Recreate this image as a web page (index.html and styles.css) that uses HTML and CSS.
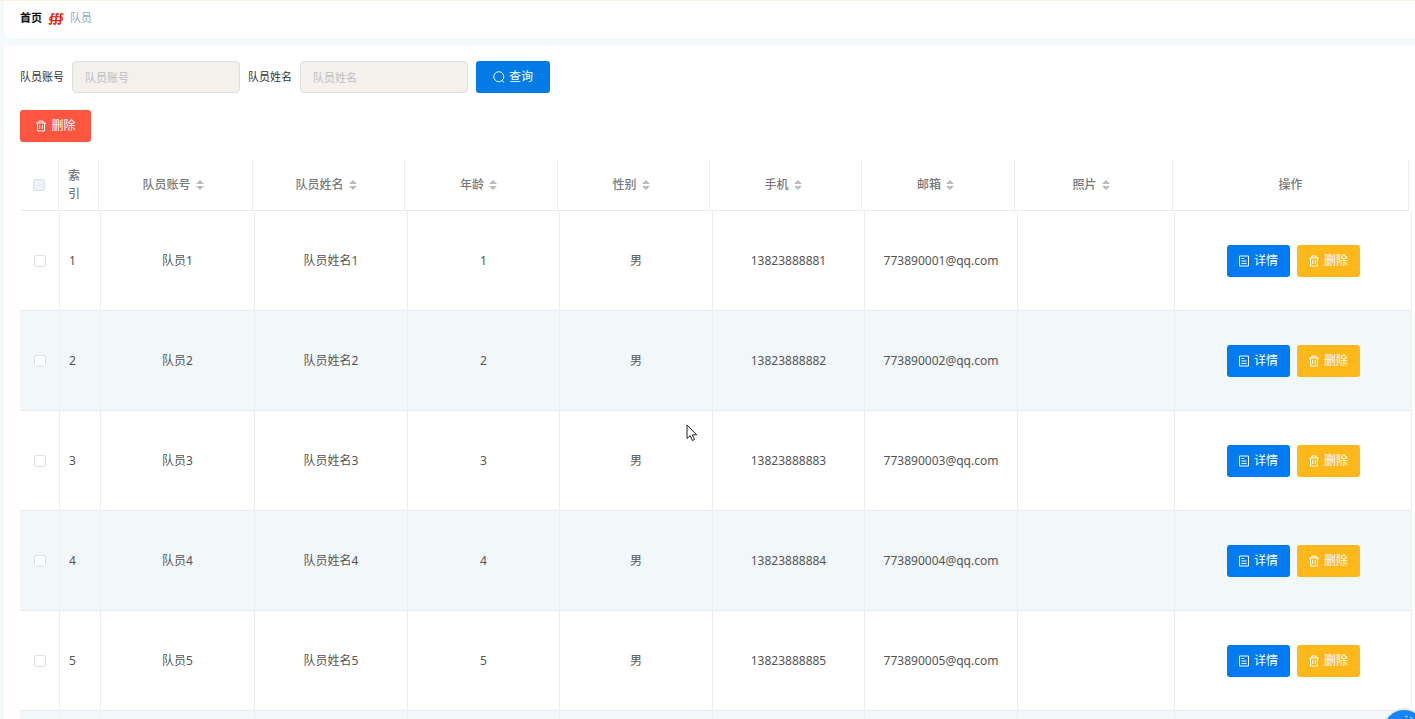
FILE: index.html
```html
<!DOCTYPE html>
<html lang="zh-CN">
<head>
<meta charset="utf-8">
<title>队员</title>
<link rel="stylesheet" href="styles.css">
</head>
<body>
<svg class="sprite" aria-hidden="true">
  <symbol id="trash" viewBox="0 0 12 12"><path d="M1 3h10M4 3V1h4v2M2.500 3v8h7V3M4.700 5v4M7.300 5v4" fill="none" stroke="currentColor"/></symbol>
  <symbol id="doc" viewBox="0 0 12 12"><path d="M1.500 1h9v10h-9zM3.500 3.500h2.500M3.500 6h5M3.500 8.500h5" fill="none" stroke="currentColor"/></symbol>
  <symbol id="search" viewBox="0 0 12 12"><path d="M8.800 9.300l2.400 2.200M10.800 5.700A5 5 0 1 1 .8 5.700a5 5 0 0 1 10 0z" fill="none" stroke="currentColor"/></symbol>
  <symbol id="sort" viewBox="0 0 8 10"><path d="M4 0l4 4H0zM4 10l4-4H0z" fill="currentColor"/></symbol>
</svg>
<div class="page">
  <nav class="breadcrumb">
    <a class="home" href="#">首页</a><span class="separator">∰</span><span class="current">队员</span>
  </nav>
  <main class="card">
    <form class="filters">
      <label for="account">队员账号</label>
      <input id="account" class="field" type="text" placeholder="队员账号">
      <label for="name">队员姓名</label>
      <input id="name" class="field" type="text" placeholder="队员姓名">
      <button class="btn btn-search" type="button"><svg class="icon"><use href="#search"/></svg>查询</button>
    </form>
    <div class="actions">
      <button class="btn btn-delete" type="button"><svg class="icon"><use href="#trash"/></svg>删除</button>
    </div>
    <div class="head-wrap">
      <table class="grid head">
        <colgroup><col class="h-check"><col class="h-index"><col class="w154"><col class="w152"><col class="w153"><col class="w152"><col class="w152"><col class="w153"><col class="w158"><col class="w236"></colgroup>
        <thead>
          <tr>
            <th><input class="check check-all" type="checkbox" aria-label="全选"></th>
            <th class="index">索引</th>
            <th><span class="sortable">队员账号<svg class="sort"><use href="#sort"/></svg></span></th>
            <th><span class="sortable">队员姓名<svg class="sort"><use href="#sort"/></svg></span></th>
            <th><span class="sortable">年龄<svg class="sort"><use href="#sort"/></svg></span></th>
            <th><span class="sortable">性别<svg class="sort"><use href="#sort"/></svg></span></th>
            <th><span class="sortable">手机<svg class="sort"><use href="#sort"/></svg></span></th>
            <th><span class="sortable">邮箱<svg class="sort"><use href="#sort"/></svg></span></th>
            <th><span class="sortable">照片<svg class="sort"><use href="#sort"/></svg></span></th>
            <th>操作</th>
          </tr>
        </thead>
      </table>
    </div>
    <table class="grid rows">
      <colgroup><col class="b-check"><col class="b-index"><col class="w154"><col class="w153"><col class="w152"><col class="w153"><col class="w152"><col class="w153"><col class="w157"><col class="w237"></colgroup>
      <tbody>
        <tr><td><input class="check" type="checkbox" aria-label="选择 1"></td><td class="index">1</td><td>队员1</td><td>队员姓名1</td><td>1</td><td>男</td><td>13823888881</td><td>773890001@qq.com</td><td></td><td><div class="ops"><button class="btn btn-detail" type="button"><svg class="icon"><use href="#doc"/></svg>详情</button><button class="btn btn-remove" type="button"><svg class="icon"><use href="#trash"/></svg>删除</button></div></td></tr>
        <tr><td><input class="check" type="checkbox" aria-label="选择 2"></td><td class="index">2</td><td>队员2</td><td>队员姓名2</td><td>2</td><td>男</td><td>13823888882</td><td>773890002@qq.com</td><td></td><td><div class="ops"><button class="btn btn-detail" type="button"><svg class="icon"><use href="#doc"/></svg>详情</button><button class="btn btn-remove" type="button"><svg class="icon"><use href="#trash"/></svg>删除</button></div></td></tr>
        <tr><td><input class="check" type="checkbox" aria-label="选择 3"></td><td class="index">3</td><td>队员3</td><td>队员姓名3</td><td>3</td><td>男</td><td>13823888883</td><td>773890003@qq.com</td><td></td><td><div class="ops"><button class="btn btn-detail" type="button"><svg class="icon"><use href="#doc"/></svg>详情</button><button class="btn btn-remove" type="button"><svg class="icon"><use href="#trash"/></svg>删除</button></div></td></tr>
        <tr><td><input class="check" type="checkbox" aria-label="选择 4"></td><td class="index">4</td><td>队员4</td><td>队员姓名4</td><td>4</td><td>男</td><td>13823888884</td><td>773890004@qq.com</td><td></td><td><div class="ops"><button class="btn btn-detail" type="button"><svg class="icon"><use href="#doc"/></svg>详情</button><button class="btn btn-remove" type="button"><svg class="icon"><use href="#trash"/></svg>删除</button></div></td></tr>
        <tr><td><input class="check" type="checkbox" aria-label="选择 5"></td><td class="index">5</td><td>队员5</td><td>队员姓名5</td><td>5</td><td>男</td><td>13823888885</td><td>773890005@qq.com</td><td></td><td><div class="ops"><button class="btn btn-detail" type="button"><svg class="icon"><use href="#doc"/></svg>详情</button><button class="btn btn-remove" type="button"><svg class="icon"><use href="#trash"/></svg>删除</button></div></td></tr>
        <tr><td></td><td></td><td></td><td></td><td></td><td></td><td></td><td></td><td></td><td></td></tr>
      </tbody>
    </table>
  </main>
  <svg class="pointer" viewBox="0 0 12 18" aria-hidden="true"><path d="M1 1v13.500l3.200-3 2.100 5 2.200-1-2.100-4.700h4.300z" fill="#fff" stroke="#222"/></svg>
  <svg class="bubble" viewBox="0 0 44 44" aria-hidden="true"><circle cx="22" cy="22" r="21" fill="#1684f5" stroke="#e6edf2" stroke-width="2"/><path d="M23 8l3 1M28 9l3 2" stroke="#bfe0ff" fill="none"/></svg>
</div>
</body>
</html>
```
FILE: styles.css
```css
* { box-sizing: border-box; }

body {
  margin: 0;
  background: #f4f9fb;
  color: #606266;
  font-family: "Noto Sans", "Noto Sans CJK SC", sans-serif;
  font-size: 12px;
  line-height: 18px;
}

.sprite { position: absolute; width: 0; height: 0; }

.page {
  position: relative;
  display: flex;
  flex-direction: column;
  gap: 7px;
  height: 100vh;
  overflow: hidden;
  padding-left: 4px;
  border-top: 1px solid #fcf3e0;
}

.breadcrumb {
  display: flex;
  flex: none;
  align-items: center;
  padding: 8px 16px 11px;
  background: #fff;
  border-radius: 0 0 0 8px;
  font-size: 11px;
}
.home { color: #111; font-weight: 700; text-decoration: none; }
.separator {
  width: 28px;
  color: #f01800;
  font-family: "DejaVu Sans", sans-serif;
  font-size: 12px;
  font-style: italic;
  font-weight: 700;
  text-align: center;
}
.current { color: #97a8be; }

.card {
  flex: 1;
  padding: 16px 3px 0 16px;
  background: #fff;
}

.filters { display: flex; align-items: center; gap: 8px; }
.filters label { color: #333; font-size: 11px; }

.field {
  width: 168px;
  height: 32px;
  padding: 0 12px;
  border: 1px solid #dfe0e4;
  border-radius: 4px;
  background: #f4f1ed;
  color: #606266;
  font: inherit;
  font-size: 11px;
}
.field::placeholder { color: #b9bdc5; }

.btn {
  display: inline-flex;
  align-items: center;
  justify-content: center;
  gap: 4px;
  height: 32px;
  padding: 0;
  border: 0;
  border-radius: 3px;
  color: #fff;
  font: inherit;
}
.icon { width: 12px; height: 12px; }
.btn-search { width: 74px; background: #027be6; }
.btn-delete { width: 71px; background: #ff5541; }
.btn-detail { width: 63px; background: #007bf2; }
.btn-remove { width: 63px; background: #feb81a; }

.actions { display: flex; padding: 17px 0; }

.head-wrap { padding-right: 3px; }

.grid {
  width: 100%;
  table-layout: fixed;
  border-collapse: separate;
  border-spacing: 0;
}
.grid th, .grid td {
  padding: 0;
  border-right: 1px solid #ebeef3;
  border-bottom: 1px solid #e8ecf2;
  text-align: center;
}
.grid th { height: 52px; color: #77797d; font-weight: 500; }
.grid td { height: 100px; color: #555; }
.grid .index { padding-left: 9px; padding-right: 9px; text-align: left; }
.rows tr:nth-child(even) { background: #f2f7fa; }

.h-check { width: 39px; }
.h-index { width: 40px; }
.b-check { width: 40px; }
.b-index { width: 41px; }
.w152 { width: 152px; }
.w153 { width: 153px; }
.w154 { width: 154px; }
.w157 { width: 157px; }
.w158 { width: 158px; }
.w236 { width: 236px; }
.w237 { width: 237px; }

.sortable { display: inline-flex; align-items: center; }
.sort { width: 8px; height: 10px; margin: 0 5px; color: #b9bbc0; }

.check {
  appearance: none;
  width: 12px;
  height: 12px;
  margin: 0;
  border: 1px solid #dcdfe6;
  border-radius: 2px;
  background: #fff;
  vertical-align: middle;
}
.check-all { background: #edf2fc; }

.ops { display: flex; justify-content: center; gap: 7px; }

.pointer { position: absolute; left: 686px; top: 423px; width: 12px; height: 18px; }
.bubble { position: absolute; right: -11px; bottom: -33px; width: 44px; height: 44px; }
```
